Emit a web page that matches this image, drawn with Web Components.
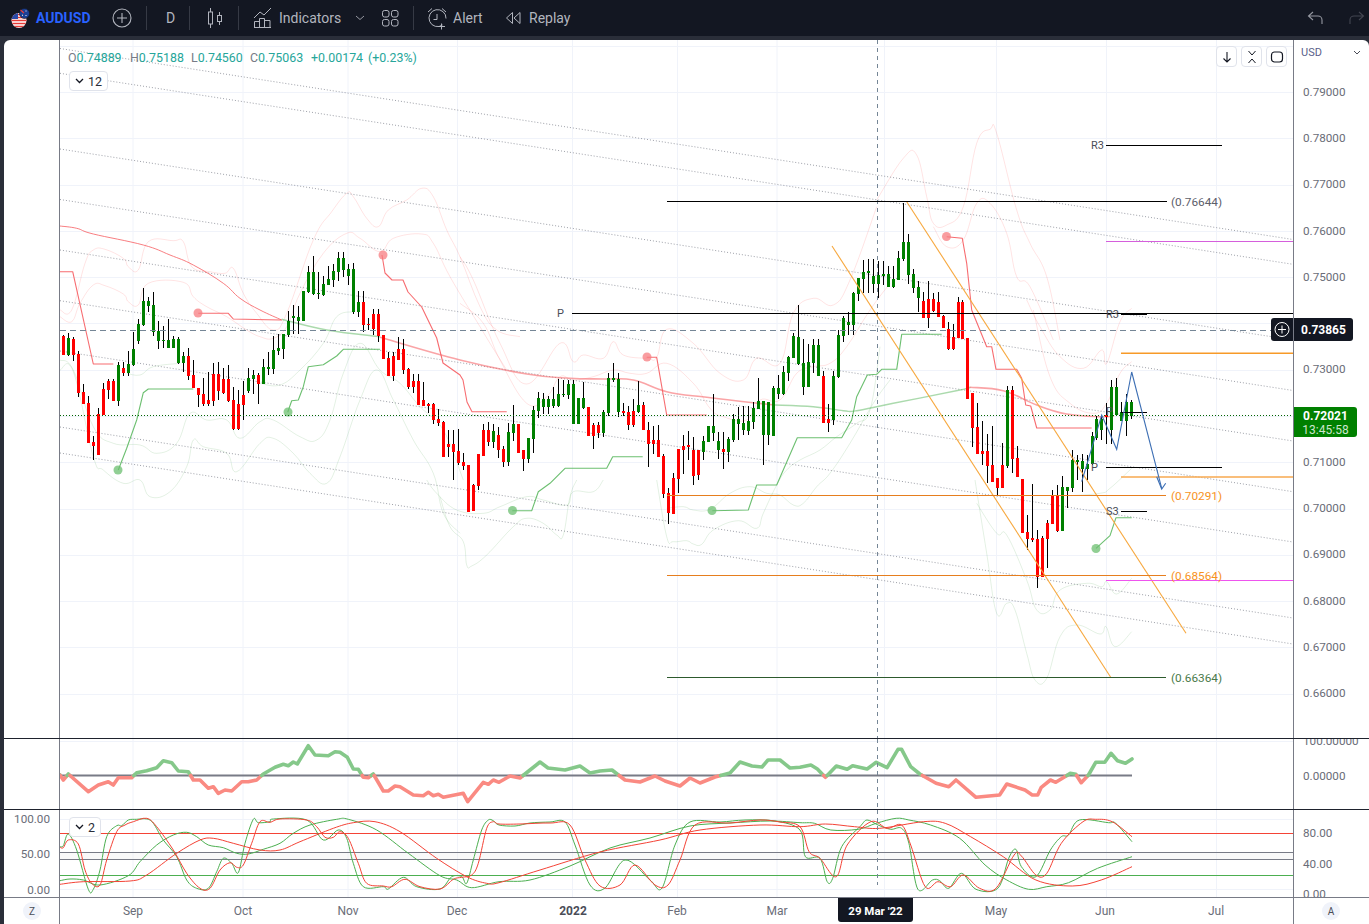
<!DOCTYPE html>
<html lang="en"><head><meta charset="utf-8"><title>AUDUSD</title>
<style>html,body{margin:0;padding:0;background:#2a2e39;overflow:hidden;height:100%;font-family:Roboto,"Liberation Sans",sans-serif}</style>
</head><body>
<tv-app>
  <tv-topbar slot="top"></tv-topbar>
  <tv-row slot="chart" h="698" line="#1e222d">
    <tv-side slot="left"></tv-side>
    <tv-main-chart slot="center"></tv-main-chart>
    <tv-price-axis slot="right"></tv-price-axis>
  </tv-row>
  <tv-row slot="chart" h="70" line="#1e222d">
    <tv-side slot="left"></tv-side>
    <tv-momentum-chart slot="center"></tv-momentum-chart>
    <tv-scale slot="right" labels="100.00000:1,0.00000:36" x="9"></tv-scale>
  </tv-row>
  <tv-row slot="chart" h="87" line="#787b86">
    <tv-scale slot="left" labels="100.00:8,50.00:43,0.00:79" align="right"></tv-scale>
    <tv-stoch-chart slot="center"></tv-stoch-chart>
    <tv-scale slot="right" labels="80.00:22,40.00:53,0.00:83" x="9"></tv-scale>
  </tv-row>
  <tv-row slot="chart" h="26">
    <tv-round slot="left" label="Z" style="margin:4px 0 0 19px"></tv-round>
    <tv-time-axis slot="center"></tv-time-axis>
    <tv-round slot="right" label="A" style="margin:4px 0 0 28px"></tv-round>
  </tv-row>
</tv-app>
<script>
const def=(name,html,extra)=>{customElements.define(name,class extends HTMLElement{constructor(){super();const r=this.attachShadow({mode:'open'});r.innerHTML=typeof html==='function'?html(this):html;}connectedCallback(){if(extra)extra(this)}})};
const P=(ox,oy,a,sx=3)=>{let s=[];for(let i=0;i<a.length;i+=2)s.push((ox+a[i]/sx).toFixed(1)+','+(oy+a[i+1]/3).toFixed(1));return s.join(' ')};
const PL=(pts,c,w=1,op=1,extra='')=>`<polyline points="${pts}" fill="none" stroke="${c}" stroke-width="${w}" opacity="${op}" stroke-linejoin="round" ${extra}/>`;
const SM=(pts,c,w=1,op=1,k=5)=>{const p=pts.trim().split(/\s+/).map(s=>s.split(',').map(Number));let d=`M${p[0][0]} ${p[0][1]}`;for(let i=0;i<p.length-1;i++){const a=p[Math.max(0,i-1)],b=p[i],e=p[i+1],f=p[Math.min(p.length-1,i+2)];d+=`C${(b[0]+(e[0]-a[0])/k).toFixed(1)} ${(b[1]+(e[1]-a[1])/k).toFixed(1)} ${(e[0]-(f[0]-b[0])/k).toFixed(1)} ${(e[1]-(f[1]-b[1])/k).toFixed(1)} ${e[0]} ${e[1]}`}return `<path d="${d}" fill="none" stroke="${c}" stroke-width="${w}" opacity="${op}"/>`};
const R=(a)=>{let s=[];for(let i=0;i<a.length;i+=2)s.push(a[i]+','+a[i+1]);return s.join(' ')};
const GX=[133,243,348,457.5,572.5,677.5,777,884.5,996.5,1106.5,1216.5];
const vgrid=(t,b)=>GX.map(x=>`<line x1="${x}" x2="${x}" y1="${t}" y2="${b}" stroke="#f0f3fa"/>`).join('');
const XH=(t,b)=>`<line x1="877.5" x2="877.5" y1="${t}" y2="${b}" stroke="#758696" stroke-dasharray="4 4"/>`;
const SVG=(x,y,w,h,c)=>`<style>:host{display:block;width:${w}px;height:${h}px;position:relative;overflow:hidden}svg{display:block}text{font-family:Roboto,"Liberation Sans",sans-serif}</style><svg width="${w}" height="${h}" viewBox="${x} ${y} ${w} ${h}" xmlns="http://www.w3.org/2000/svg">${c}</svg>`;

const S1=`R288,345,285,345 G295,345,278,348 R297,345,290,362 R342,460,333,470 R456,492,432,492 R490,608,468,608 R606,618,588,660 R522,645,505,645 R447,526,430,526 R423,450,417,477 R423,483,418,483 G376,483,366,498 R384,399,366,408 G372,399,333,408 G328,376,275,378 G252,304,237,312 G183,256,144,258 G183,198,170,216 G195,275,156,288 G273,303,243,327 G300,303,258,324 G300,324,237,324 G297,324,288,324 G297,369,290,372 G348,369,336,396 R348,408,324,420 R405,444,360,444 R444,465,444,501 R462,492,414,498 R480,492,396,498 R402,483,369,498 R402,453,366,480 R417,459,384,462 R417,483,375,486 R480,567,441,570 R492,567,450,570 R465,495,423,540 G414,453,384,459 G405,417,390,462 R405,432,399,492 G381,432,357,432 G381,387,336,405 G330,387,288,402 G323,333,282,345 G282,327,282,357 G243,285,213,291 G228,234,195,282 G231,243,198,282 G153,243,153,243 G96,156,78,158 G96,162,48,165 G159,162,96,177 G132,165,108,168 G117,135,78,135 G93,120,72,141 G54,96,36,123 G54,90,36,111 G87,108,72,135 G87,216,69,222 G186,216,153,231 R186,255,153,276 R253,255,234,270 R222,267,207,285 R222,288,207,306 R285,357,285,357 R354,408,336,408 R348,408,336,423 R327,360,291,360 R327,390,297,402 R387,441,384,447 R423,441,402,459 R423,495,402,495 R480,498,426,498 R492,498,489,519 R492,540,489,552 R537,549,507,558 R546,651,543,651 R612,621,570,651 R612,636,570,720 R633,669,567,675`;
const S2=`R786,798,759,810 R795,936,795,936 R855,933,852,933 R762,858,762,870 R690,768,672,768 R690,726,666,738 G693,726,672,744 R705,750,681,774 R747,786,738,801 G696,786,669,798 G672,699,615,723 R672,759,672,759 R750,777,750,813 G714,777,714,789 G630,717,618,759 G594,633,576,654 G597,621,579,642 G597,621,588,642 G597,618,561,624 G582,618,537,621 G582,585,540,590 G552,585,540,597 G552,672,540,672 G594,672,594,672 G594,624,546,627 R621,708,621,708 R675,708,669,747 R675,699,666,714 G636,699,630,711 G534,639,519,648 G534,540,489,546 G537,636,519,651 R633,639,609,648 R636,675,618,690 R633,675,597,681 G615,636,543,639 R615,690,606,690 R690,732,666,801 R720,732,678,762 R720,771,675,771 R768,882,762,894 R879,939,864,972 R834,942,819,942 R747,837,747,879 R738,750,705,822 R735,741,693,780 R750,828,711,855 R750,825,750,840 G723,756,708,780 G678,726,678,726 G678,699,582,723 G723,750,696,777 R747,756,696,807 G717,756,711,786 G657,720,642,726 G657,672,621,720 G669,690,618,705 G663,693,618,705 G624,666,606,687 G603,627,534,627 G603,705,603,795 G606,705,606,735 G564,708,558,708 G564,582,525,597 G516,582,498,585 G471,519,468,543 G408,474,399,474 G411,492,315,495 G489,561,417,585 G486,561,432,561 G435,489,417,519 G435,528,417,528 R528,669,513,669 R657,669,612,696 G528,660,513,675 G405,531,390,534 G354,408,348,426 G366,375,336,405 G279,375,276,405 G234,282,234,303 G216,237,180,279 G213,219,177,279 G228,252,177,279 G225,252,183,294 G222,228,183,255 G222,261,198,261 G237,261,198,264 G174,240,153,237 G126,177,9,183 G126,225,102,252 G222,264,207,279 G261,294,243,336 R303,354,276,354 R297,354,243,384 R297,333,279,336 R306,351,276,351 R348,384,345,384 R387,447,366,450 R411,447,372,450 R306,414,291,414`;
const S3=`R6,118,0,118 R114,298,114,298 R279,384,279,440 R381,462,310,462 R453,462,363,495 R453,498,402,549 R495,546,378,546 R534,564,534,585 R495,564,430,564 G270,498,258,504 R270,477,258,519 R474,531,438,531 R537,699,537,699 R696,717,645,750 R714,720,552,726 R717,831,690,864 R714,831,708,831 R669,717,660,804 R588,672,570,672 R588,693,555,696 G561,693,528,693 G561,573,561,624 G480,564,450,576 G480,486,465,540 G483,507,462,576 G492,507,465,540 G408,492,396,495 G357,414,348,420 G357,390,345,420 R345,352,308,432 G261,390,240,432 G261,345,234,348 G336,363,306,363 G306,363,282,408 G306,348,300,357`;
const candles=(str,x0,oy,step=5)=>str.split(' ').map((c,i)=>{const col=c[0]=='R'?'#ff0000':'#008000';const [t,b,wt,wb]=c.slice(1).split(',').map(Number);const x=Math.round(x0+i*step);const T=oy+t/3,B=oy+b/3,WT=oy+wt/3,WB=oy+wb/3;return `<rect x="${x}" y="${WT.toFixed(1)}" width="1" height="${Math.max(1,WB-WT).toFixed(1)}" fill="#000"/><rect x="${x-1}" y="${T.toFixed(1)}" width="3" height="${Math.max(1,B-T).toFixed(1)}" fill="${col}"/>`}).join('');

const mainChart=()=>{
 let c='';
 for(let i=0;i<15;i++){const y=(45.8+46.28*i).toFixed(0);c+=`<line x1="60" x2="1293" y1="${+y+.5}" y2="${+y+.5}" stroke="#f0f3fa"/>`}
 c+=vgrid(40,738);
 const PK='#ff0000',GN='#008000';
 const band=(p,col)=>SM(p,col,1,.11);
 [P(60,170,[0,420,35,420,75,280,100,240,135,238,190,265,205,290,235,300,265,215,340,212,370,215,395,290,450,305,495,310,520,295,550,370,590,430,640,480,680,430,760,210,815,125,860,70,880,80,920,145,955,170,985,120,1040,90,1085,55,1120,80,1160,180,1200,260,1260,410,1310,480,1380,500]),
  P(60,170,[0,440,35,455,60,400,100,345,135,347,190,372,205,395,235,405,265,340,370,337,400,380,440,410,500,440,560,480,600,500,640,505,680,470,720,370,790,250,860,190,900,205,960,245,1000,205,1085,192,1120,220,1170,320,1260,470,1290,520,1340,600]),
  P(460,200,[0,170,40,240,120,430,200,552,300,430,340,485,370,465,430,475,460,425,490,465,560,475,590,472,620,388,700,430,780,520,850,540,890,475,960,490,1000,340,1060,295,1120,315,1170,240,1250,20]),
  P(460,200,[0,310,70,370,120,480,200,610,260,590,300,530,340,540,400,530,460,510,510,520,560,520,620,490,700,550,750,625,790,650,860,660,900,600,960,600,1010,520,1060,500,1110,490,1160,440,1230,330,1290,250]),
  P(800,100,[230,300,310,175,350,165,380,290,400,370,440,375,490,320,530,130,570,88,590,100,650,330,690,430,740,530,780,720]),
  P(800,100,[400,380,440,440,490,420,530,310,570,310,620,400,650,530,690,560,760,720]),
  P(960,300,[200,0,240,80,300,170,370,205,425,150,440,190,480,65,515,25]),
  P(960,300,[220,30,270,230,330,310,400,340,440,310,480,220,515,185])
 ].forEach(p=>c+=band(p,PK));
 [P(60,240,[0,390,40,395,100,650,130,690,190,730,240,720,270,770,330,755,380,680,400,600,430,620,500,640,530,695,600,610,640,595,700,640,750,700,800,730,840,650,900,480,950,390,1000,480,1060,600,1120,700,1150,820,1200,880]),
  P(60,240,[0,360,40,390,100,560,160,610,240,615,290,640,350,610,390,520,440,540,500,540,540,595,600,545,640,540,720,590,770,600,810,540,850,400,900,310,960,390,1020,430,1080,500,1150,570,1210,720]),
  P(60,240,[200,400,240,405,280,380,360,370]),
  P(60,240,[600,430,660,435,720,390,790,310,830,230,880,215]),
  P(400,480,[80,0,110,40,170,90,250,100,300,80,380,50,430,60,500,75,520,35,580,35,610,0]),
  P(400,480,[120,50,150,140,190,185,200,255,215,258,260,225,340,140,380,115,430,130,470,165,490,165,510,50,530,0]),
  P(400,480,[770,0,800,170,820,185,860,182,880,192,905,193,940,150,1015,122,1070,145,1090,100,1130,15,1160,-30,1200,-60,1260,-90,1310,-130,1370,-170,1410,-210,1440,-400]),
  P(400,480,[800,85,850,80,880,90,930,88,990,40,1050,20,1100,40,1140,45,1180,75,1210,70,1250,20,1290,-20,1350,-110,1420,-230,1470,-300]),
  P(900,470,[225,30,260,250,290,430,320,400,345,420,380,550,405,630,440,625,480,500,530,465,600,492,618,470,645,530,695,485]),
  P(900,470,[230,100,290,190,320,195,380,330,410,420,450,420,480,360,560,340,605,350,620,335,650,372,695,325]),
  P(960,300,[330,587,420,580,450,565,515,505])
 ].forEach(p=>c+=band(p,GN));
 [48.5,73.3,149,199.5,250,300.7,351,427,453].forEach(y=>{c+=`<line x1="60" y1="${y}" x2="1293" y2="${(y+191).toFixed(1)}" stroke="#9598a1" stroke-dasharray="1 2" opacity=".9"/>`});
 c+=XH(40,738);
 const RL='#f7676b',GL='#66bb6a';
 c+=SM(R([60,226,76.7,228.3,93.3,234,143.3,245,170,255,193.3,265,223.3,283.3,240,298.3,260,310,281.7,320]),RL,1,.85);
 c+=SM(R([281.7,319.3,326.7,330,380,336.7]),GL,1.6,.55);
 c+=SM(R([380,337.3,460,360,526.7,374,570,378.3,603.3,379,633.3,380,666.7,391.7,706.7,397.3,753,402.7,775,405]),RL,1.6,.6);
 c+=SM(R([775,405,813.3,406.7,843.3,410.7,856.7,410.7,893.3,403.3,960,390,970,387.3]),GL,1.4,.55);
 c+=SM(R([970,387.3,1003.3,390.7,1036.7,405,1066.7,414,1100,416.7,1114,416]),RL,1.6,.6);
 const reds=[R([60,271.7,72.7,271.7,93.3,364,113.3,364]),R([198.3,313.3,228.3,313.3,233.3,319,281.7,320]),R([382,255,385,273,392,280,403,280,408,292,421.7,307,436.7,338,443,363,460,375,463,380,467,402,472,411.7,506.7,411.7]),R([646.7,357.3,656.7,357.3,666.7,415,706.7,415]),R([946.7,236.7,962.3,238.3,966.7,263.3,971.7,310,986.7,346.7,991.7,346.7,996,369.3,1016.7,369.3,1021.7,378.3,1025.7,405,1030.7,406,1036.7,428,1091.7,428])];
 reds.forEach(p=>c+=PL(p,'#f65c60',1.1,.9));
 const greens=[R([118.3,470,126.7,448.3,136.7,420,143.3,392.7,148.3,389,193.3,389]),R([287.7,412.3,291.7,400.7,298.3,400,303.3,386.7,308.3,366.7,323.3,364.7,336.7,356,343.3,349.3,380,349.3]),R([512.3,510.7,531.7,510.7,538.3,491.7,550,483.3,565,468.3,606.7,468.3,612.7,456.7,642.7,456.7]),R([712.3,510.7,748.3,510,756.7,485,776.7,485,797.3,437.7,841.7,437.7,851.7,420,856.7,396.7,867.3,375,876.7,374.3,881.7,369.3,896.7,369.3,901.7,334.3,941.7,334.3]),R([1096,548.3,1110,535.7,1116,517.7,1131.7,517.7])];
 greens.forEach(p=>c+=PL(p,'#5cb860',1.1,.9));
 [[198,313],[383,255],[647,357],[946.5,236.5]].forEach(d=>c+=`<circle cx="${d[0]}" cy="${d[1]}" r="4.500" fill="#f77c80" opacity=".75"/>`);
 [[118,470],[288,412],[512.5,510.5],[712,510.5],[1096,548.5]].forEach(d=>c+=`<circle cx="${d[0]}" cy="${d[1]}" r="4.500" fill="#6cbf70" opacity=".75"/>`);
 c+=`<g shape-rendering="crispEdges">`+candles(S1,63.3,240)+candles(S2,463.3,200)+candles(S3,962.3,300,4.97)+`</g>`;
 c+=`<line x1="60" x2="1293" y1="330.5" y2="330.5" stroke="#758696" stroke-dasharray="6 4"/>`;
 c+=`<line x1="60" x2="1293" y1="415.5" y2="415.5" stroke="#006400" stroke-dasharray="1 2"/>`;
 const H=(x1,x2,y,col,w=1,op=1)=>`<line x1="${x1}" x2="${x2}" y1="${y}" y2="${y}" stroke="${col}" stroke-width="${w}" opacity="${op}"/>`;
 c+=`<line x1="832" y1="246" x2="1110.7" y2="677.3" stroke="#f7a83e" stroke-width="1.1"/><line x1="906.7" y1="201.7" x2="1186" y2="633.3" stroke="#f7a83e" stroke-width="1.1"/>`;
 c+=H(667,1167,201.5,'#000')+H(1106,1222,145.5,'#000')+H(572,1293,313.5,'#000')+H(1121,1147,314.5,'#000')+H(1121,1147,412.5,'#000')+H(1106,1222,467.5,'#000')+H(1121,1147,511.5,'#000');
 c+=H(1121,1293,353.3,'#f79a28',1.6)+H(1121,1293,477,'#f7a94f',2,.75);
 c+=H(667,1166,495.5,'#e67e1e',1.2)+H(667,1166,575.5,'#e67e1e',1.2)+H(667,1166,677.5,'#2d5a2d',1.2);
 c+=H(1106,1293,241.5,'#d55fdc',1.1)+H(1106,1293,580.5,'#ee55ee',1.2);
 const T=(x,y,s,col='#3a3d47',sz=12)=>`<text x="${x}" y="${y}" fill="${col}" font-size="${sz}">${s}</text>`;
 c+=T(1091,149,'R3',"#4a4d57",11)+T(557,317,'P','#4a4d57',11)+T(1106,318,'R3','#4a4d57',11)+T(1106,415,'P','#4a4d57',11)+T(1091,471,'P','#4a4d57',11)+T(1106,515,'S3','#4a4d57',11);
 c+=T(1171,206,'(0.76644)','#5d606b',11.8)+T(1171,500,'(0.70291)','#f7931e',11.8)+T(1171,580,'(0.68564)','#f7931e',11.8)+T(1171,682,'(0.66364)','#4a7a4a',11.8);
 c+=`<polyline points="1081.7,481.7 1101.7,415 1116.7,449.3 1131.7,372 1161.7,488.3" fill="none" stroke="#3d6fb4" stroke-width="1.1"/><polyline points="1156.7,476.7 1161.7,489 1165.7,483.3" fill="none" stroke="#3d6fb4" stroke-width="1.1"/>`;
 return c;
};

def('tv-app',`<style>:host{display:grid;grid-template-rows:36px 1fr;width:1369px;height:924px}.body{padding:4px 0 0 4px;display:flex;min-height:0}.wrap{display:flex;flex-direction:column;width:1365px;background:#fff;border-radius:6px 6px 0 0;overflow:hidden}</style><slot name="top"></slot><div class="body"><div class="wrap"><slot name="chart"></slot></div></div>`);

def('tv-row',e=>`<style>:host{display:block;height:${e.getAttribute('h')}px;${e.getAttribute('line')?`border-bottom:1px solid ${e.getAttribute('line')};`:''}flex:none}.f{display:flex;height:100%}.l{flex:none;width:56px;box-sizing:border-box;border-right:1px solid #787b86;position:relative}.c{flex:none;position:relative;width:1233px;height:100%}.r{flex:none;box-sizing:border-box;border-left:1px solid #787b86;position:relative;width:76px}</style><div class="f"><div class="l"><slot name="left"></slot></div><div class="c"><slot name="center"></slot></div><div class="r"><slot name="right"></slot></div></div>`);
def('tv-side',`<style>:host{display:block;height:100%}</style>`);

def('tv-icon-btn',e=>`<style>:host{display:flex;align-items:center;justify-content:center;width:19px;height:19px;border:1px solid #e0e3eb;border-radius:4px;background:#fff}</style><slot></slot>`);

def('tv-legend',`<style>:host{display:flex;position:absolute;left:8px;top:10px;height:15px;font-size:12.4px;line-height:15px;color:#26a69a;white-space:nowrap}i{font-style:normal;color:#787b86}span{display:inline-block}</style><span style="width:62px"><i>O</i>0.74889</span><span style="width:61px"><i>H</i>0.75188</span><span style="width:59px"><i>L</i>0.74560</span><span style="width:61px"><i>C</i>0.75063</span><span style="width:57px">+0.00174</span><span>(+0.23%)</span>`);

def('tv-collapse',e=>`<style>:host{display:flex;align-items:center;gap:4px;position:absolute;left:${e.getAttribute('x')}px;top:${e.getAttribute('y')}px;height:18px;padding:0 5px;border:1px solid #e0e3eb;border-radius:4px;background:#fff;font-size:12.5px;color:#2a2e39;box-sizing:content-box}</style><svg width="9" height="6" viewBox="0 0 9 6"><path d="M1 1l3.500 3.500L8 1" fill="none" stroke="#131722" stroke-width="1.3"/></svg><span>${e.getAttribute('n')}</span>`);

def('tv-main-chart',()=>SVG(60,40,1233,698,mainChart())+`
<style>.tools{position:absolute;right:6px;top:6px;display:flex;gap:4px}.plus{position:absolute;right:0;top:278px;width:22px;height:23px;background:#131722;border-radius:3px 0 0 3px;display:flex;align-items:center;justify-content:center}</style>
<tv-legend></tv-legend><tv-collapse n="12" x="9" y="31"></tv-collapse>
<div class="tools">
<tv-icon-btn><svg width="14" height="14" viewBox="0 0 14 14"><path d="M7 2v10M3.500 8.500L7 12l3.500-3.500" fill="none" stroke="#131722" stroke-width="1.1"/></svg></tv-icon-btn>
<tv-icon-btn><svg width="14" height="14" viewBox="0 0 14 14"><path d="M3.500 1l3.500 4 3.500-4M3.500 13l3.500-4 3.500 4" fill="none" stroke="#131722"/></svg></tv-icon-btn>
<tv-icon-btn><svg width="14" height="14" viewBox="0 0 14 14"><rect x="1.500" y="2" width="11" height="10" rx="3" fill="none" stroke="#131722" stroke-width="1.2"/></svg></tv-icon-btn>
</div>
<div class="plus"><svg width="17" height="17" viewBox="0 0 17 17"><circle cx="8" cy="8.500" r="7" fill="none" stroke="#fff"/><path d="M8 4.500v8M4 8.500h8" stroke="#fff"/></svg></div>`);

def('tv-price-axis',()=>{let h=`<style>:host{display:block;position:relative;height:100%;font-size:11.7px;color:#6a6d78}.t{position:absolute;left:9px;line-height:14px}.usd{position:absolute;left:7px;top:6px;font-size:11px;color:#5b5f8a;line-height:14px}.chev{position:absolute;left:59px;top:10px}.tag{position:absolute;left:0;color:#fff;font-weight:700;text-align:center;font-size:12px}.a{top:278px;width:59px;height:23px;line-height:25px;background:#131722;border-radius:0 3px 3px 0}.b{top:367px;width:63px;height:30px;background:#008000;line-height:14px;padding-top:2px;box-sizing:border-box;border-radius:0 3px 3px 0}.b span{display:block;font-weight:400;color:#cde6cd}</style>
<span class="usd">USD</span><svg class="chev" width="8" height="6" viewBox="0 0 8 6"><path d="M1 1l3 3 3-3" fill="none" stroke="#4a4d57"/></svg>`;
for(let i=0;i<14;i++){const v=(0.79-i*0.01).toFixed(5);h+=`<span class="t" style="top:${(92-40+46.23*i-7).toFixed(0)}px">${v}</span>`}
return h+`<div class="tag a">0.73865</div><div class="tag b">0.72021<span>13:45:58</span></div>`});

def('tv-scale',e=>{const labs=e.getAttribute('labels').split(',').map(s=>s.split(':'));const right=e.getAttribute('align')=='right';return `<style>:host{display:block;position:relative;height:100%;overflow:hidden;font-size:11.7px;color:#6a6d78}span{position:absolute;line-height:14px;${right?'right:9px':'left:'+e.getAttribute('x')+'px'}}</style>`+labs.map(l=>`<span style="top:${+l[1]-6}px">${l[0]}</span>`).join('')});

def('tv-round',e=>`<style>:host{display:flex;align-items:center;justify-content:center;width:18px;height:18px;border-radius:50%;background:#f0f3fa;font-size:10px;color:#4a4d57}</style>${e.getAttribute('label')}`);

const SX7=1568/569;
const mom=()=>{
 const seg=[];const add=(ox,oy,a,sx=3)=>{for(let i=0;i<a.length;i+=2)seg.push([ox+a[i]/sx,oy+a[i+1]/3])};
 add(0,730,[180,135,190,150,205,132,265,185,295,165,325,155,340,165,355,143,395,143,410,128,440,122,470,113,490,92,515,98,535,123,565,125,580,150,600,150,625,175,640,170,655,190,675,180,695,183,725,155,745,155,770,150,790,132,825,112,850,103,865,107,880,96,892,102,925,47,945,75,985,77,1005,65,1020,67,1042,82,1060,117,1075,118,1090,142,1105,143,1120,132,1150,183,1165,183,1185,168,1200,170,1240,195,1270,197,1285,187,1300,197,1315,193,1330,202,1390,190,1403,215,1450,157,1465,163,1480,150,1497,157]);
 [[510,776],[520,778],[530,770],[540,762],[548,768],[565,770],[580,766],[590,773],[600,771],[612,770],[625,780],[640,782],[655,776],[665,781],[680,786],[690,778],[700,783],[715,777],[730,773],[740,762],[752,766],[762,767],[768,760],[780,760],[790,768]].forEach(p=>seg.push(p));
 add(800,730,[0,112,30,105,48,117,70,142,100,108,130,118,145,107,185,117,210,97,240,113,270,58,280,58,305,110,330,132,375,160,410,170,430,150,485,202,550,195,570,162,620,180,640,195,655,195,665,172,690,150,705,157,745,130,760,133,775,158,795,135,815,97,840,97,857,70,875,92,897,100,915,87],SX7);
 const Z=775.5;
 let runs=[],cur=null;
 const push=(c,p)=>{if(!cur||cur.c!=c){cur={c,p:[]};runs.push(cur)}cur.p.push(p)};
 for(let i=0;i<seg.length-1;i++){let a=seg[i],b=seg[i+1];const ca=a[1]<Z,cb=b[1]<Z;push(ca,a);if(ca!=cb){const t=(Z-a[1])/(b[1]-a[1]);const m=[a[0]+t*(b[0]-a[0]),Z];push(ca,m);push(cb,m)}}
 push(seg[seg.length-1][1]<Z,seg[seg.length-1]);
 let c=vgrid(739,809)+`<line x1="60" x2="1293" y1="741.5" y2="741.5" stroke="#f0f3fa"/><line x1="60" x2="1132" y1="775.5" y2="775.5" stroke="#787b86" stroke-width="2"/>`;
 runs.forEach(r=>c+=`<polyline points="${r.p.map(p=>p[0].toFixed(1)+','+p[1].toFixed(1)).join(' ')}" fill="none" stroke="${r.c?'#85c88a':'#fa8a82'}" stroke-width="3.6" stroke-linejoin="round" stroke-linecap="round"/>`);
 return c+XH(739,809);
};
def('tv-momentum-chart',()=>SVG(60,739,1233,70,mom()));

const stoch=()=>{
 const GR='#4caf50',RD='#f44336';
 const join=(a,mid,b)=>P(0,730,a)+' '+mid.map(p=>p.join(',')).join(' ')+' '+P(800,730,b,SX7);
 let c=vgrid(810,897);
 [819.5,889.5].forEach(y=>c+=`<line x1="60" x2="1293" y1="${y}" y2="${y}" stroke="#f0f3fa"/>`);
 c+=`<rect x="60" y="853" width="1233" height="6" fill="#eee" opacity=".35"/>`;
 c+=`<g shape-rendering="crispEdges"><line x1="60" x2="1293" y1="833.5" y2="833.5" stroke="#f44336"/><line x1="60" x2="1293" y1="852.5" y2="852.5" stroke="#787b86"/><line x1="60" x2="1293" y1="859.5" y2="859.5" stroke="#787b86"/><line x1="60" x2="1293" y1="875.5" y2="875.5" stroke="#4caf50"/></g>`;
 const sg=join([180,452,210,447,250,450,300,465,385,437,420,395,470,345,520,315,560,307,590,320,625,345,670,353,710,370,745,372,790,358,840,340,880,310,930,285,1010,268,1045,268,1130,300,1225,370,1320,437,1370,450,1415,473,1497,455],[[530,880],[570,866],[610,848],[650,838],[690,826],[730,823],[770,821]],[0,278,40,280,85,300,160,298,210,280,265,265,300,270,360,285,440,325,510,405,570,450,630,478,680,470,740,458,820,415,915,380]);
 const sr=join([180,463,250,455,390,453,440,435,530,370,600,330,640,325,700,340,780,360,840,360,900,335,1000,295,1060,278,1125,275,1200,305,1310,385,1400,440,1460,460,1497,458],[[540,870],[600,852],[660,840],[700,830],[760,825]],[0,290,70,282,150,290,220,295,340,275,400,280,470,320,560,380,650,450,750,468,830,450,915,410]);
 const fg=join([180,350,190,347,205,312,230,360,265,478,280,478,300,420,320,320,350,287,365,287,385,270,410,268,440,267,460,280,490,330,530,380,560,450,590,475,625,475,650,425,670,385,695,400,715,428,735,340,760,268,775,278,810,275,820,267,920,270,970,330,1015,300,1040,325,1060,400,1090,470,1150,470,1165,477,1210,442,1250,470,1320,477,1355,440,1385,440,1400,460,1420,390,1445,300,1465,270,1480,272,1497,285],[[515,826],[530,823],[550,822],[565,822],[575,845],[590,885],[605,888],[625,860],[650,880],[662,888],[675,845],[690,822],[720,822],[745,820],[775,821]],[0,300,15,380,55,385,75,455,90,445,115,350,165,290,185,270,215,285,250,298,280,295,300,340,325,478,365,450,385,452,410,475,445,430,485,478,545,475,575,385,595,358,610,410,650,440,690,360,720,320,740,315,770,270,850,278,870,280,915,335]);
 const fr=join([180,352,190,353,205,330,235,342,255,420,275,460,300,465,320,390,350,305,375,285,400,275,440,265,470,290,520,360,560,430,600,475,630,475,660,420,690,398,710,412,730,405,755,340,780,275,810,277,840,267,920,270,950,290,975,322,1000,322,1020,305,1045,325,1075,400,1100,460,1150,468,1175,470,1215,448,1260,470,1320,477,1360,448,1385,442,1415,435,1435,400,1460,295,1480,275,1497,282],[[520,824],[550,823],[570,825],[585,860],[600,886],[620,885],[635,865],[655,885],[668,885],[680,860],[695,825],[730,823],[760,820],[780,822]],[0,290,25,365,55,385,100,440,130,345,195,275,240,295,280,285,305,345,345,470,380,455,415,470,450,435,495,475,540,475,590,375,610,378,650,435,680,430,720,340,780,275,815,268,860,275,915,320]);
 [sg,fg].forEach(p=>c+=SM(p,GR,1,1,6));
 [sr,fr].forEach(p=>c+=SM(p,RD,1,1,6));
 return c+XH(810,885);
};
def('tv-stoch-chart',()=>SVG(60,810,1233,87,stoch())+`<tv-collapse n="2" x="9" y="7"></tv-collapse>`);

def('tv-time-axis',()=>{const L=[['Sep',133],['Oct',243],['Nov',348],['Dec',457],['2022',573,1],['Feb',677],['Mar',777],['May',996],['Jun',1105],['Jul',1216]];
return `<style>:host{display:block;position:relative;height:100%;font-size:12px;color:#6a6d78}span{position:absolute;top:6px;line-height:14px;transform:translateX(-50%)}.d{position:absolute;left:778px;top:0;width:75px;height:24px;background:#131722;color:#fff;font-weight:700;font-size:11.5px;text-align:center;line-height:26px;border-radius:0 0 3px 3px}</style>`+L.map(l=>`<span style="left:${l[1]-60}px;${l[2]?'font-weight:700;color:#4a4d57':''}">${l[0]}</span>`).join('')+`<div class="d">29 Mar '22</div>`});

def('tv-topbar',`<style>
:host{display:flex;align-items:center;height:36px;background:#131722;color:#b2b5be;font-size:14px;white-space:nowrap}
.sym{color:#2962ff;font-weight:700;font-size:14px;width:53px;margin-left:6px}
svg{display:block;flex:none}
.d{width:1px;height:24px;background:#363a45;flex:none}
.sp{flex:1}
</style>
<svg style="margin-left:11px" width="19" height="22" viewBox="0 0 19 22"><defs><clipPath id="us"><circle cx="8" cy="13.5" r="7.500"/></clipPath></defs><g clip-path="url(#us)"><rect y="6" width="16" height="16" fill="#fff"/><path d="M0 7.500h16M0 10.500h16M0 13.500h16M0 16.500h16M0 19.500h16" stroke="#e53935" stroke-width="1.500"/><rect y="6" width="7" height="6" fill="#2a4aa8"/></g><circle cx="13.500" cy="6.500" r="5" fill="#1c3f94" stroke="#131722" stroke-width=".6"/><path d="M11 4l1 1M15 3.500v1M15 8v1M11 8l1 .5" stroke="#fff"/><path d="M9.500 3l3.500 3" stroke="#e53935" stroke-width="1.200"/></svg>
<span class="sym">AUDUSD</span>
<svg style="margin-left:23px" width="20" height="20" viewBox="0 0 20 20"><circle cx="10" cy="10" r="9" fill="none" stroke="#b2b5be" stroke-width="1.100"/><path d="M10 5v10M5 10h10" stroke="#b2b5be" stroke-width="1.100"/></svg>
<span class="d" style="margin-left:14px"></span>
<span style="margin-left:19px;width:10px;font-size:14px">D</span>
<span class="d" style="margin-left:13px"></span>
<svg style="margin-left:17px" width="16" height="24" viewBox="0 0 16 24"><path d="M3.500 2v4M3.500 18v4M12.500 6v4M12.500 15v4" stroke="#b2b5be"/><rect x="1.500" y="6" width="4" height="12" fill="none" stroke="#b2b5be"/><rect x="10.500" y="9.500" width="4" height="6" fill="none" stroke="#b2b5be"/></svg>
<span class="d" style="margin-left:15px"></span>
<svg style="margin-left:14px" width="20" height="22" viewBox="0 0 20 22"><path d="M1 11l6-6 4 3 7-7" fill="none" stroke="#b2b5be"/><path d="M1.500 20.500v-6h5v6M6.500 20.500v-9h5v9M11.500 20.500v-7h5.500v7M1 20.500h17" fill="none" stroke="#b2b5be"/></svg>
<span style="margin-left:6px;width:62px">Indicators</span>
<svg style="margin-left:14px" width="10" height="6" viewBox="0 0 10 6"><path d="M1 1l4 3.500L9 1" fill="none" stroke="#9598a1"/></svg>
<svg style="margin-left:17px" width="17" height="17" viewBox="0 0 17 17"><g fill="none" stroke="#b2b5be"><rect x=".5" y=".5" width="6.500" height="6.500" rx="2"/><rect x="9.500" y=".5" width="6.500" height="6.500" rx="2"/><rect x=".5" y="9.500" width="6.500" height="6.500" rx="2"/><rect x="9.500" y="9.500" width="6.500" height="6.500" rx="2"/></g></svg>
<span class="d" style="margin-left:14px"></span>
<svg style="margin-left:13px" width="21" height="23" viewBox="0 0 21 23"><g fill="none" stroke="#b2b5be"><path d="M15.500 18a8.500 8.500 0 1 1 3.500-6.500"/><path d="M1 5l4-3.500M15 1.500L19 5M10 7v5.500H6.500M14.500 16.500v6M11.500 19.500h6.500"/></g></svg>
<span style="margin-left:5px;width:32px">Alert</span>
<svg style="margin-left:20px" width="17" height="14" viewBox="0 0 17 14"><path d="M7.500 1.500L1.500 7l6 5.500zM15 1.500L9 7l6 5.500z" fill="none" stroke="#b2b5be"/></svg>
<span style="margin-left:7px;width:43px">Replay</span>
<span class="sp"></span>
<svg width="16" height="14" viewBox="0 0 16 14"><path d="M6 1L1.500 5 6 9M1.500 5H11a4 4 0 0 1 4 4v4" fill="none" stroke="#9598a1" stroke-width="1.100"/></svg>
<svg style="margin:0 4px 0 26px" width="16" height="14" viewBox="0 0 16 14"><path d="M10 1l4.500 4L10 9M14.500 5H5a4 4 0 0 0-4 4v4" fill="none" stroke="#434651" stroke-width="1.100"/></svg>`);
</script>
</body></html>
